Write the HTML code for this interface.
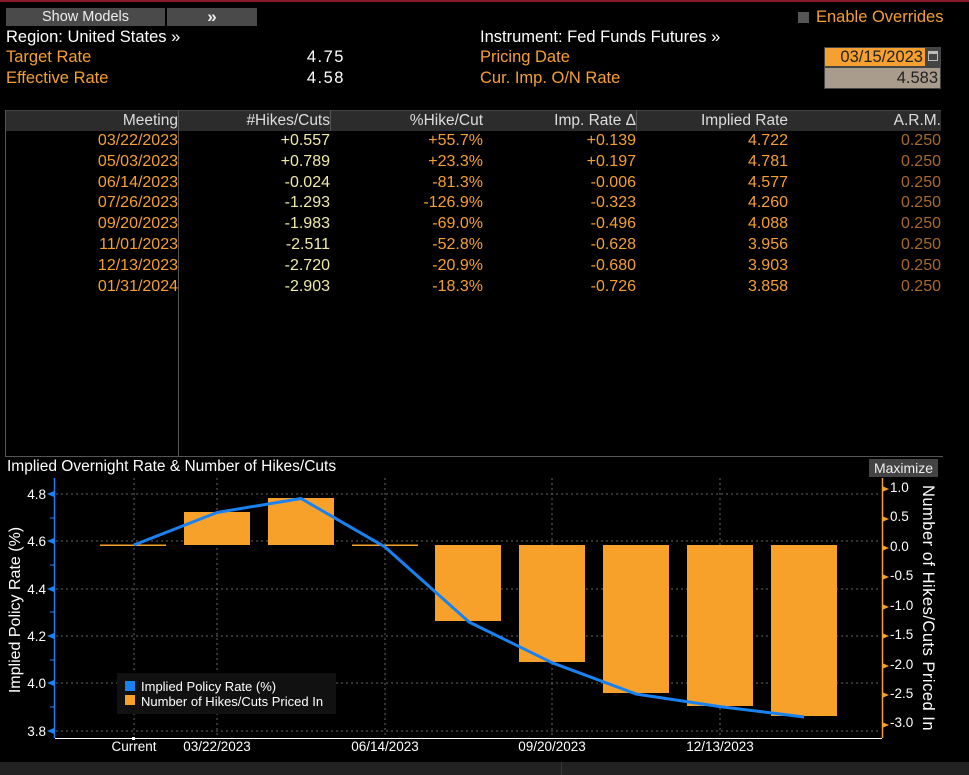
<!DOCTYPE html>
<html><head><meta charset="utf-8"><style>
*{margin:0;padding:0;box-sizing:border-box}
body{width:969px;height:775px;background:#000;position:relative;overflow:hidden;font-family:"Liberation Sans","DejaVu Sans",sans-serif;font-size:16.5px;color:#fff}
.a{position:absolute;white-space:nowrap;line-height:20px}
.or{color:#f5a030}
.btn{position:absolute;background:#4a4a4a;color:#eee;text-align:center;font-size:14.5px;line-height:18px;top:8px;height:18px}
.tbl{position:absolute;left:5px;top:110px;width:938px;height:347px;border-left:1px solid #555;border-bottom:1px solid #555}
.hdr{position:absolute;left:0;top:0;width:935px;height:21px;background:#2c2c2c;border-top:1px solid #444}
.col{position:absolute;top:0;text-align:right;line-height:20.8px;font-size:16px}
.col div:first-child{color:#ddd;height:21px;line-height:21px;font-size:15.5px}
</style></head><body>
<div style="position:absolute;left:0;top:0;width:969px;height:2px;background:#8a1a2a"></div>
<div class="btn" style="left:6px;width:159px">Show Models</div>
<div class="btn" style="left:167px;width:90px;font-size:17px;font-weight:bold">»</div>
<div style="position:absolute;left:798px;top:12px;width:11px;height:11px;background:#555"></div>
<div class="a or" style="left:816px;top:7px;font-size:16.5px">Enable Overrides</div>
<div class="a" style="left:6px;top:27px">Region: United States »</div>
<div class="a or" style="left:6px;top:47px">Target Rate</div>
<div class="a" style="left:245px;width:100px;text-align:right;top:47px;letter-spacing:1.5px">4.75</div>
<div class="a or" style="left:6px;top:68px">Effective Rate</div>
<div class="a" style="left:245px;width:100px;text-align:right;top:68px;letter-spacing:1.5px">4.58</div>
<div class="a" style="left:480px;top:27px">Instrument: Fed Funds Futures »</div>
<div class="a or" style="left:480px;top:47px">Pricing Date</div>
<div class="a or" style="left:480px;top:68px">Cur. Imp. O/N Rate</div>
<div style="position:absolute;left:824px;top:47px;width:117px;height:42px;background:#444"></div>
<div class="a" style="left:825px;top:48px;width:100px;height:18px;background:#f5a030;color:#222;text-align:right;padding-right:2px;line-height:18px">03/15/2023</div>
<div style="position:absolute;left:928px;top:51px;width:10px;height:10px;border:1.5px solid #bbb;border-top-width:3px"></div>
<div class="a" style="left:825px;top:68px;width:115px;height:20px;background:#aa9c8c;color:#222;text-align:right;padding-right:2px">4.583</div>

<div class="tbl">
<div class="hdr"></div>
<div style="position:absolute;left:172px;top:0;width:1px;height:347px;background:#555"></div>
<div style="position:absolute;left:324px;top:0;width:1px;height:21px;background:#555"></div>
<div style="position:absolute;left:630px;top:0;width:1px;height:21px;background:#555"></div>
<div class="col" style="left:0;width:172px"><div>Meeting</div><div class="or">03/22/2023</div><div class="or">05/03/2023</div><div class="or">06/14/2023</div><div class="or">07/26/2023</div><div class="or">09/20/2023</div><div class="or">11/01/2023</div><div class="or">12/13/2023</div><div class="or">01/31/2024</div></div>
<div class="col" style="left:172px;width:152px;color:#f0eaa8"><div>#Hikes/Cuts</div><div>+0.557</div><div>+0.789</div><div>-0.024</div><div>-1.293</div><div>-1.983</div><div>-2.511</div><div>-2.720</div><div>-2.903</div></div>
<div class="col or" style="left:324px;width:153px"><div>%Hike/Cut</div><div>+55.7%</div><div>+23.3%</div><div>-81.3%</div><div>-126.9%</div><div>-69.0%</div><div>-52.8%</div><div>-20.9%</div><div>-18.3%</div></div>
<div class="col or" style="left:477px;width:153px"><div>Imp. Rate Δ</div><div>+0.139</div><div>+0.197</div><div>-0.006</div><div>-0.323</div><div>-0.496</div><div>-0.628</div><div>-0.680</div><div>-0.726</div></div>
<div class="col or" style="left:630px;width:152px"><div>Implied Rate</div><div>4.722</div><div>4.781</div><div>4.577</div><div>4.260</div><div>4.088</div><div>3.956</div><div>3.903</div><div>3.858</div></div>
<div class="col" style="left:782px;width:153px;color:#a8692a"><div>A.R.M.</div><div>0.250</div><div>0.250</div><div>0.250</div><div>0.250</div><div>0.250</div><div>0.250</div><div>0.250</div><div>0.250</div></div>
</div>

<div class="a" style="left:7px;top:457px;font-size:15.5px">Implied Overnight Rate &amp; Number of Hikes/Cuts</div>
<div class="a" style="left:869px;top:459px;width:69px;height:18px;background:#444;color:#eee;text-align:center;line-height:18px;font-size:14px">Maximize</div>

<svg width="969" height="775" style="position:absolute;left:0;top:0" font-family="Liberation Sans, sans-serif">
<g stroke="#666" stroke-dasharray="2,3" stroke-width="1">
<line x1="56" y1="494" x2="880" y2="494"/><line x1="56" y1="541" x2="880" y2="541"/><line x1="56" y1="589" x2="880" y2="589"/><line x1="56" y1="636" x2="880" y2="636"/><line x1="56" y1="683" x2="880" y2="683"/><line x1="56" y1="731" x2="880" y2="731"/>
<line x1="134" y1="478" x2="134" y2="738"/><line x1="217" y1="478" x2="217" y2="738"/><line x1="385" y1="478" x2="385" y2="738"/><line x1="552" y1="478" x2="552" y2="738"/><line x1="720" y1="478" x2="720" y2="738"/>
</g>
<g fill="#f7a12a">
<rect x="100" y="544.5" width="66" height="1.5"/>
<rect x="184" y="512" width="66" height="33"/>
<rect x="268" y="498" width="66" height="47"/>
<rect x="352" y="544.5" width="66" height="1.5"/>
<rect x="435" y="545" width="66" height="76"/>
<rect x="519" y="545" width="66" height="117"/>
<rect x="603" y="545" width="66" height="148"/>
<rect x="687" y="545" width="66" height="161"/>
<rect x="771" y="545" width="66" height="171"/>
</g>
<polyline points="134,545 217,512.5 301,498.5 385,547 469,622 552,662.7 636,694 720,706.6 804,717" fill="none" stroke="#1a82f0" stroke-width="3" stroke-linejoin="round"/>
<line x1="54.5" y1="478" x2="54.5" y2="738" stroke="#1a82f0" stroke-width="1.5"/>
<g fill="#1a82f0">
<path d="M47 494l7-3v6z"/><path d="M47 541l7-3v6z"/><path d="M47 589l7-3v6z"/><path d="M47 636l7-3v6z"/><path d="M47 683l7-3v6z"/><path d="M47 731l7-3v6z"/>
</g>
<g stroke="#1a82f0"><line x1="50" y1="518" x2="54" y2="518"/><line x1="50" y1="565" x2="54" y2="565"/><line x1="50" y1="612" x2="54" y2="612"/><line x1="50" y1="660" x2="54" y2="660"/><line x1="50" y1="707" x2="54" y2="707"/></g>
<g fill="#fff" font-size="13.5" text-anchor="end"><text x="46" y="499">4.8</text><text x="46" y="546">4.6</text><text x="46" y="594">4.4</text><text x="46" y="641">4.2</text><text x="46" y="688">4.0</text><text x="46" y="736">3.8</text></g>
<line x1="55" y1="738.5" x2="882" y2="738.5" stroke="#fff" stroke-width="1"/>
<rect x="132" y="737" width="3" height="3" fill="#fff"/>
<g fill="#fff" font-size="13.5" text-anchor="middle"><text x="134" y="751">Current</text><text x="217" y="751">03/22/2023</text><text x="385" y="751">06/14/2023</text><text x="552" y="751">09/20/2023</text><text x="720" y="751">12/13/2023</text></g>
<line x1="882.5" y1="478" x2="882.5" y2="738" stroke="#f7a12a" stroke-width="1.5"/>
<g fill="#f7a12a">
<path d="M882 486l7 3-7 3z"/><path d="M882 516l7 3-7 3z"/><path d="M882 545l7 3-7 3z"/><path d="M882 574l7 3-7 3z"/><path d="M882 604l7 3-7 3z"/><path d="M882 633l7 3-7 3z"/><path d="M882 663l7 3-7 3z"/><path d="M882 692l7 3-7 3z"/><path d="M882 722l7 3-7 3z"/>
</g>
<g fill="#fff" font-size="13.5"><text x="890" y="492">1.0</text><text x="890" y="521">0.5</text><text x="890" y="551">0.0</text><text x="890" y="580">-0.5</text><text x="890" y="610">-1.0</text><text x="890" y="639">-1.5</text><text x="890" y="669">-2.0</text><text x="890" y="698">-2.5</text><text x="890" y="727">-3.0</text></g>
<text transform="translate(20,610) rotate(-90)" fill="#fff" font-size="16" text-anchor="middle">Implied Policy Rate (%)</text>
<text transform="translate(923,608) rotate(90)" fill="#fff" font-size="16.5" text-anchor="middle" letter-spacing="0.5">Number of Hikes/Cuts Priced In</text>
<rect x="117" y="673" width="219" height="41" fill="#111"/>
<rect x="125" y="681" width="10" height="10" fill="#1a82f0"/>
<rect x="125" y="695" width="10" height="10" fill="#f7a12a"/>
<g fill="#fff" font-size="13"><text x="141" y="691">Implied Policy Rate (%)</text><text x="141" y="706">Number of Hikes/Cuts Priced In</text></g>
<rect x="0" y="762" width="969" height="13" fill="#222"/>
<line x1="561.5" y1="762" x2="561.5" y2="775" stroke="#3a3a3a"/>
</svg>
</body></html>
